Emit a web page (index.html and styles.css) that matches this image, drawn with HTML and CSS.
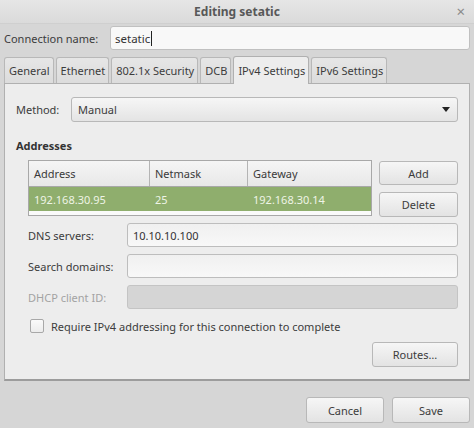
FILE: index.html
```html
<!DOCTYPE html>
<html>
<head>
<meta charset="utf-8">
<link rel="stylesheet" href="styles.css">
</head>
<body>
<div class="window">
  <div class="titlebar">
    <span class="title">Editing setatic</span>
    <span class="close">×</span>
  </div>
  <div class="namerow">
    <span class="namelabel">Connection name:</span>
    <div class="entry nameentry">setatic<span class="caret"></span></div>
  </div>
  <div class="tabs">
    <div class="tab">General</div>
    <div class="tab">Ethernet</div>
    <div class="tab">802.1x Security</div>
    <div class="tab">DCB</div>
    <div class="tab active">IPv4 Settings</div>
    <div class="tab">IPv6 Settings</div>
  </div>
  <div class="panel">
    <div class="methodrow">
      <span class="methodlabel">Method:</span>
      <div class="combo"><span>Manual</span><span class="arrow"></span></div>
    </div>
    <div class="heading">Addresses</div>
    <div class="addrrow">
      <div class="table">
        <div class="thead">
          <div class="c c1">Address</div>
          <div class="c c2">Netmask</div>
          <div class="c c3">Gateway</div>
        </div>
        <div class="trow">
          <div class="c c1">192.168.30.95</div>
          <div class="c c2">25</div>
          <div class="c c3">192.168.30.14</div>
        </div>
      </div>
      <div class="sidebtns">
        <div class="btn addbtn">Add</div>
        <div class="btn delbtn">Delete</div>
      </div>
    </div>
    <div class="form">
      <span class="flabel">DNS servers:</span>
      <div class="entry">10.10.10.100</div>
      <span class="flabel">Search domains:</span>
      <div class="entry"></div>
      <span class="flabel disabled">DHCP client ID:</span>
      <div class="entry disabledentry"></div>
    </div>
    <div class="checkrow">
      <span class="checkbox"></span>
      <span>Require IPv4 addressing for this connection to complete</span>
    </div>
    <div class="routesrow">
      <div class="btn routes">Routes…</div>
    </div>
  </div>
  <div class="footer">
    <div class="btn fbtn">Cancel</div>
    <div class="btn fbtn">Save</div>
  </div>
</div>
</body>
</html>
```

FILE: styles.css
```css
html, body {
  margin: 0;
  padding: 0;
}
body {
  width: 474px;
  height: 428px;
  background: #d6d6d6;
  font-family: "Noto Sans", "Open Sans", sans-serif;
  font-size: 11px;
  color: #3c3c3c;
  overflow: hidden;
}
.window {
  width: 474px;
  height: 428px;
  display: flex;
  flex-direction: column;
}
.titlebar {
  height: 23px;
  border-bottom: 1px solid #cfcfcf;
  background: linear-gradient(#e6e6e6, #dadada);
  display: flex;
  align-items: center;
  justify-content: center;
  position: relative;
}
.title {
  font-weight: bold;
  color: #585858;
  font-size: 12px;
}
.close {
  position: absolute;
  right: 9px;
  top: 3px;
  color: #8a8a8a;
  font-size: 15px;
  line-height: 16px;
}
.namerow {
  display: flex;
  align-items: center;
  padding: 2px 4px 0 4px;
  height: 24px;
}
.namelabel {
  width: 106px;
  font-size: 11px;
}
.entry {
  box-sizing: border-box;
  height: 24px;
  border: 1px solid #bdbdbd;
  border-radius: 3px;
  background: linear-gradient(#f0f0f0, #f8f8f8);
  padding: 0 5px;
  display: flex;
  align-items: center;
  color: #333;
}
.nameentry {
  flex: 1;
  background: #f8f8f8;
  border-color: #c0c0c0;
  padding-left: 4px;
  font-size: 11.5px;
}
.caret {
  display: inline-block;
  width: 1px;
  height: 15px;
  background: #222;
  margin-left: 1px;
}
.tabs {
  display: flex;
  gap: 2px;
  padding-left: 4px;
  margin-top: 5px;
  height: 28px;
  align-items: flex-end;
}
.tab {
  box-sizing: border-box;
  height: 26px;
  padding: 0 3px 0 4px;
  border: 1px solid #b8b8b8;
  border-bottom: none;
  border-radius: 3px 3px 0 0;
  background: linear-gradient(#e6e6e6, #dcdcdc);
  display: flex;
  align-items: center;
  color: #3c3c3c;
  font-size: 11px;
}
.tab.active {
  height: 28px;
  background: #ededed;
  position: relative;
  top: 1px;
  z-index: 1;
  border-color: #b0b0b0;
}
.panel {
  box-sizing: border-box;
  margin: 0 4px;
  height: 298px;
  background: #ededed;
  border: 1px solid #b0b0b0;
  border-bottom: 2px solid #9c9c9c;
  padding: 13px 11px 0 11px;
  display: flex;
  flex-direction: column;
}
.methodrow {
  display: flex;
  align-items: center;
  height: 25px;
}
.methodlabel {
  width: 55px;
}
.combo {
  box-sizing: border-box;
  flex: 1;
  height: 25px;
  border: 1px solid #b8b8b8;
  border-radius: 3px;
  background: linear-gradient(#f6f6f6, #e4e4e4);
  display: flex;
  align-items: center;
  justify-content: space-between;
  padding: 0 7px 0 6px;
}
.arrow {
  width: 0;
  height: 0;
  border-left: 4px solid transparent;
  border-right: 4px solid transparent;
  border-top: 5px solid #222;
}
.heading {
  font-weight: bold;
  color: #333;
  margin-top: 16px;
  height: 16px;
  line-height: 16px;
}
.addrrow {
  display: flex;
  margin-top: 6px;
  padding-left: 12px;
  gap: 7px;
}
.table {
  box-sizing: border-box;
  width: 344px;
  height: 56px;
  border: 1px solid #a8a8a8;
  background: #fafafa;
}
.thead {
  display: flex;
  height: 25px;
  border-bottom: 1px solid #a8a8a8;
  background: linear-gradient(#f5f5f5, #e8e8e8);
}
.trow {
  display: flex;
  height: 24px;
  background: #8fae6d;
  color: #eef4e6;
}
.c {
  box-sizing: border-box;
  padding-left: 5px;
  display: flex;
  align-items: center;
}
.thead .c {
  border-right: 1px solid #b4b4b4;
  color: #3a3a3a;
}
.thead .c3 {
  border-right: none;
}
.c1 { width: 121px; }
.c2 { width: 98px; }
.c3 { flex: 1; }
.sidebtns {
  display: flex;
  flex-direction: column;
  gap: 7px;
  padding-top: 1px;
}
.btn {
  box-sizing: border-box;
  border: 1px solid #b8b8b8;
  border-radius: 3px;
  background: linear-gradient(#f6f6f6, #e3e3e3);
  display: flex;
  align-items: center;
  justify-content: center;
  color: #3c3c3c;
}
.addbtn, .delbtn {
  width: 79px;
  height: 25px;
}
.addbtn { height: 24px; }
.form {
  display: grid;
  grid-template-columns: 99px 1fr;
  row-gap: 7px;
  padding-left: 12px;
  margin-top: 6px;
}
.form .entry {
  height: 24px;
}
.flabel {
  display: flex;
  align-items: center;
  height: 24px;
}
.flabel.disabled {
  color: #a3a3a3;
}
.disabledentry {
  background: #d5d5d5;
  border-color: #c4c4c4;
}
.checkrow {
  display: flex;
  align-items: center;
  margin-top: 9px;
  padding-left: 14px;
  height: 16px;
  gap: 7px;
}
.checkbox {
  box-sizing: border-box;
  width: 14px;
  height: 14px;
  border: 1px solid #a8a8a8;
  border-radius: 2px;
  background: linear-gradient(#fafafa, #ececec);
}
.routesrow {
  display: flex;
  justify-content: flex-end;
  margin-top: 8px;
}
.routes {
  width: 86px;
  height: 25px;
}
.footer {
  display: flex;
  justify-content: flex-end;
  gap: 8px;
  padding: 0 4px;
  margin-top: 16px;
}
.fbtn {
  width: 78px;
  height: 26px;
}
```
